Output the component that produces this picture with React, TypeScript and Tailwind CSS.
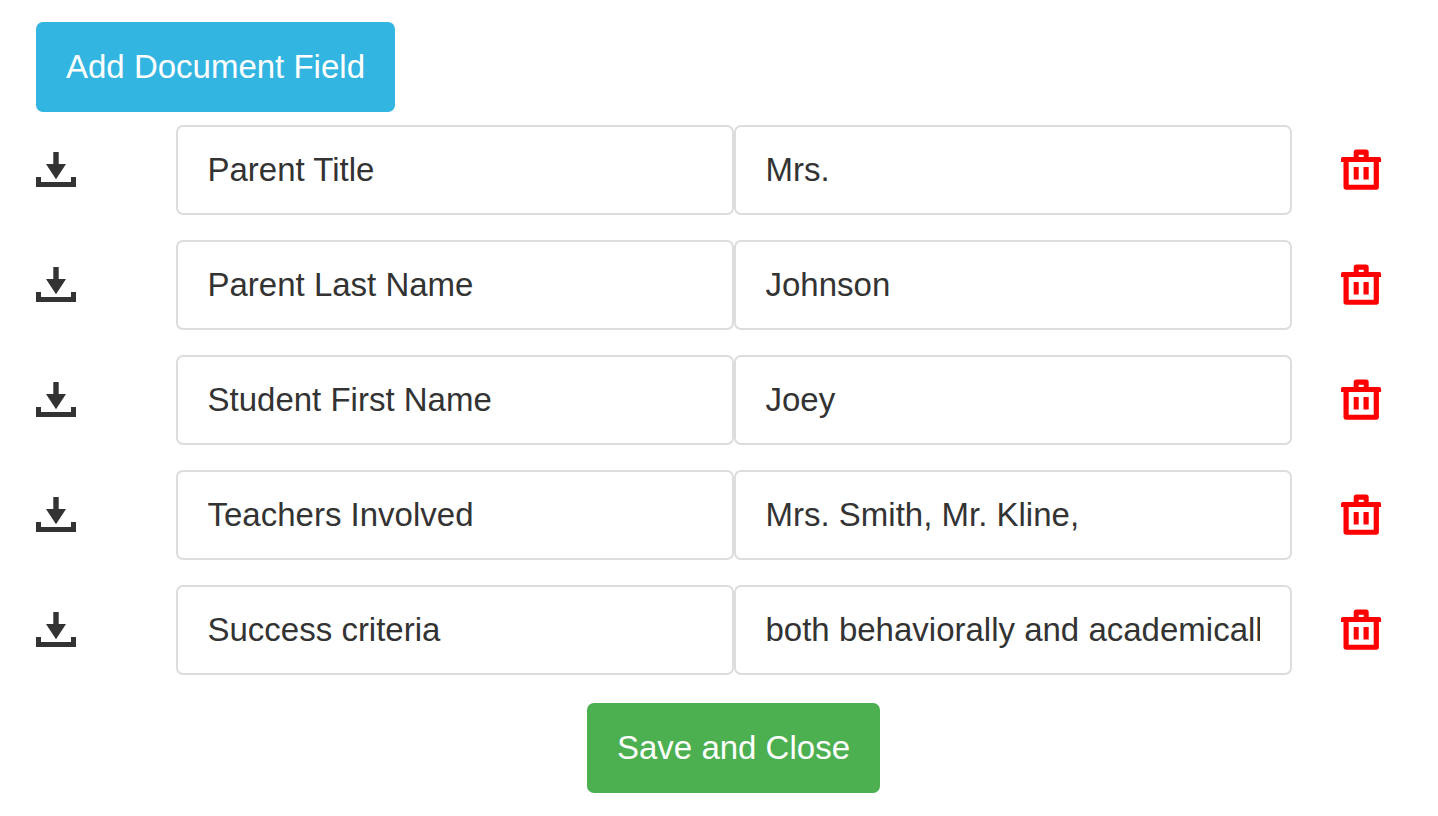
import { useState } from "react";

interface DocumentField {
  id: number;
  name: string;
  value: string;
}

const initialFields: DocumentField[] = [
  { id: 1, name: "Parent Title", value: "Mrs." },
  { id: 2, name: "Parent Last Name", value: "Johnson" },
  { id: 3, name: "Student First Name", value: "Joey" },
  { id: 4, name: "Teachers Involved", value: "Mrs. Smith, Mr. Kline," },
  { id: 5, name: "Success criteria", value: "both behaviorally and academically" },
];

const inputClass =
  "h-[90px] w-full min-w-0 rounded-[7px] border-2 border-[#ddd] bg-white px-[30px] text-[33px] text-[#333]";

function InsertIcon() {
  return (
    <svg viewBox="0 0 40 40" className="size-10" fill="currentColor" aria-hidden="true">
      <path d="M17.3 2h5.4v12H30L20 29.3 10 14h7.3z" />
      <path d="M0 27h5v5h30v-5h5v10H0z" />
    </svg>
  );
}

function TrashIcon() {
  return (
    <svg viewBox="0 0 42 40" className="h-10 w-[42px] overflow-visible" fill="currentColor" aria-hidden="true">
      <path
        fillRule="evenodd"
        d="M13.7 7V2.3q0-2.8 2.8-2.8h9.4q2.8 0 2.8 2.8V7h10.6q1.8 0 1.8 1.8V12h-2.2v25q0 2.7-2.7 2.7H6.2q-2.7 0-2.7-2.7V12H1V8.8Q1 7 2.8 7zM18.7 7h5V4.8h-5zM8.7 12v22.7h25V12z"
      />
      <path d="M13.7 17h5v12.5h-5zM23.5 17h5.2v12.5h-5.2z" />
    </svg>
  );
}

export default function App() {
  const [fields, setFields] = useState(initialFields);

  const addField = () =>
    setFields([...fields, { id: Date.now(), name: "", value: "" }]);

  const removeField = (id: number) =>
    setFields(fields.filter((field) => field.id !== id));

  const updateField = (id: number, changes: Partial<DocumentField>) =>
    setFields(fields.map((field) => (field.id === id ? { ...field, ...changes } : field)));

  return (
    <main className="bg-white pt-[22px] pr-[7px] pb-6 pl-9 font-['Liberation_Sans',Arial,sans-serif] text-[#333]">
      <button
        type="button"
        onClick={addField}
        className="block h-[90px] rounded-[7px] bg-[#33b5e1] px-[30px] text-[33px] text-white"
      >
        Add Document Field
      </button>

      <div className="mt-[13px] flex flex-col gap-[25px]">
        {fields.map((field) => (
          <div key={field.id} className="grid grid-cols-[1fr_4fr_4fr_1fr] items-center">
            <button type="button" aria-label="Insert field" className="justify-self-start">
              <InsertIcon />
            </button>
            <input
              type="text"
              aria-label="Field name"
              value={field.name}
              onChange={(e) => updateField(field.id, { name: e.target.value })}
              className={inputClass}
            />
            <input
              type="text"
              aria-label="Field value"
              value={field.value}
              onChange={(e) => updateField(field.id, { value: e.target.value })}
              className={inputClass}
            />
            <button
              type="button"
              aria-label="Delete field"
              onClick={() => removeField(field.id)}
              className="justify-self-center text-[#f00]"
            >
              <TrashIcon />
            </button>
          </div>
        ))}
      </div>

      <button
        type="button"
        className="mx-auto mt-7 block h-[90px] rounded-[7px] bg-[#4caf50] px-[30px] text-[33px] text-white"
      >
        Save and Close
      </button>
    </main>
  );
}
